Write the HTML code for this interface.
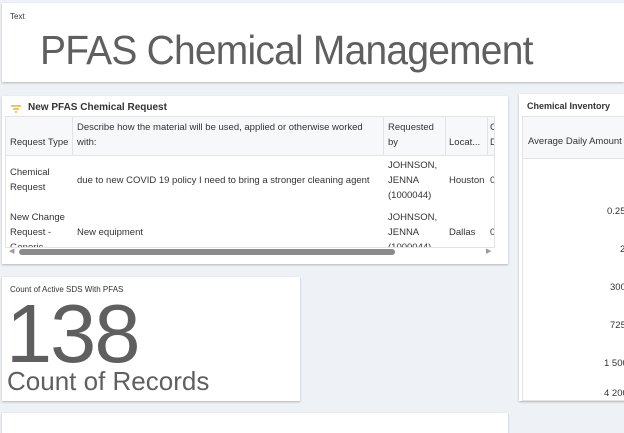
<!DOCTYPE html>
<html><head><meta charset="utf-8"><style>
*{box-sizing:border-box;margin:0;padding:0}
body{width:624px;height:423px;overflow:hidden;background:#eef2f7;font-family:"Liberation Sans",sans-serif;color:#333;position:relative}
.card{position:absolute;background:#fff;box-shadow:0 1px 2px rgba(0,0,0,.25)}
.t{position:absolute;white-space:nowrap}
.cell{position:absolute;font-size:9.5px;line-height:15px;color:#333;white-space:nowrap}
.vl{position:absolute;width:1px;background:#e3e3e3}
.hl{position:absolute;height:1px;background:#e3e3e3}
</style></head><body>
<div class="card" style="left:2px;top:3px;width:622px;height:79px">
 <div class="t" style="left:8px;top:9px;font-size:8px;color:#333">Text</div>
 <div class="t" style="left:38px;top:24px;font-size:41px;color:#5f5f5f;letter-spacing:-0.8px;transform:scaleX(0.95);transform-origin:0 0">PFAS Chemical Management</div>
</div>

<div class="card" style="left:2px;top:96px;width:506px;height:168px;overflow:hidden">
 <svg style="position:absolute;left:8px;top:8px" width="12" height="10"><path d="M1 2h10M3 5h6M5 8h2" stroke="#e0b33c" stroke-width="1.5"/></svg>
 <div class="t" style="left:26px;top:6px;font-size:10px;font-weight:bold;color:#333">New PFAS Chemical Request</div>
 <div style="position:absolute;left:3px;top:20px;width:490px;height:132px;overflow:hidden;border:1px solid #e3e3e3">
  <div style="position:absolute;left:0;top:0;width:490px;height:38px;background:#f7f8fa"></div>
  <div class="hl" style="left:0;top:38px;width:490px"></div>
  <div class="vl" style="left:66px;top:0;height:38px"></div>
  <div class="vl" style="left:377px;top:0;height:38px"></div>
  <div class="vl" style="left:439px;top:0;height:38px"></div>
  <div class="vl" style="left:481px;top:0;height:38px"></div>
  <div class="cell" style="left:4px;top:18px">Request Type</div>
  <div class="cell" style="left:71px;top:3px">Describe how the material will be used, applied or otherwise worked<br>with:</div>
  <div class="cell" style="left:382px;top:3px">Requested<br>by</div>
  <div class="cell" style="left:443px;top:18px">Locat...</div>
  <div class="cell" style="left:484px;top:3px">C<br>D</div>
  <div class="cell" style="left:4px;top:48px">Chemical<br>Request</div>
  <div class="cell" style="left:71px;top:56px">due to new COVID 19 policy I need to bring a stronger cleaning agent</div>
  <div style="position:absolute;left:377px;top:39px;width:70px;height:90px;background:#fff"></div>
  <div class="cell" style="left:382px;top:41px">JOHNSON,<br>JENNA<br>(1000044)</div>
  <div class="cell" style="left:443px;top:56px">Houston</div>
  <div class="cell" style="left:484px;top:56px">0</div>
  <div class="cell" style="left:4px;top:93px">New Change<br>Request -<br>Generic</div>
  <div class="cell" style="left:71px;top:108px">New equipment</div>
  <div class="cell" style="left:382px;top:93px">JOHNSON,<br>JENNA<br>(1000044)</div>
  <div class="cell" style="left:443px;top:108px">Dallas</div>
  <div class="cell" style="left:484px;top:108px">0</div>
  <div style="position:absolute;width:4px;height:10px;background:#666;border-radius:2px;left:491px;top:48px"></div>
 </div>
 <div style="position:absolute;left:3px;top:152px;width:490px;height:8px;background:#fff"></div>
 <div style="position:absolute;left:17px;top:153px;width:376px;height:6px;background:#8a8a8a;border-radius:3px"></div>
 <div class="t" style="left:7px;top:151px;font-size:7px;color:#999">◀</div>
 <div class="t" style="left:484px;top:151px;font-size:7px;color:#999">▶</div>
</div>

<div class="card" style="left:519px;top:94px;width:110px;height:307px">
 <div class="t" style="left:8px;top:7px;font-size:9px;font-weight:bold;color:#333">Chemical Inventory</div>
 <div style="position:absolute;left:3px;top:22px;width:110px;height:285px;border:1px solid #e3e3e3"></div>
 <div style="position:absolute;left:4px;top:23px;width:110px;height:42px;background:#f7f8fa;border-bottom:1px solid #e3e3e3"></div>
 <div class="cell" style="left:9px;top:40px">Average Daily Amount</div>
 <div class="cell" style="left:88px;top:110px">0.25</div>
 <div class="cell" style="left:101px;top:148px">2</div>
 <div class="cell" style="left:91px;top:186px">300</div>
 <div class="cell" style="left:91px;top:224px">725</div>
 <div class="cell" style="left:85px;top:262px">1 500</div>
 <div class="cell" style="left:85px;top:292px">4 200</div>
</div>

<div class="card" style="left:2px;top:277px;width:298px;height:124px">
 <div class="t" style="left:8px;top:8px;font-size:8px;color:#333">Count of Active SDS With PFAS</div>
 <div class="t" style="left:4px;top:14px;font-size:83px;line-height:86px;color:#5f5f5f;letter-spacing:-2px">138</div>
 <div class="t" style="left:5px;top:89px;font-size:26px;color:#5f5f5f">Count of Records</div>
</div>

<div class="card" style="left:2px;top:413px;width:506px;height:20px"></div>
</body></html>
